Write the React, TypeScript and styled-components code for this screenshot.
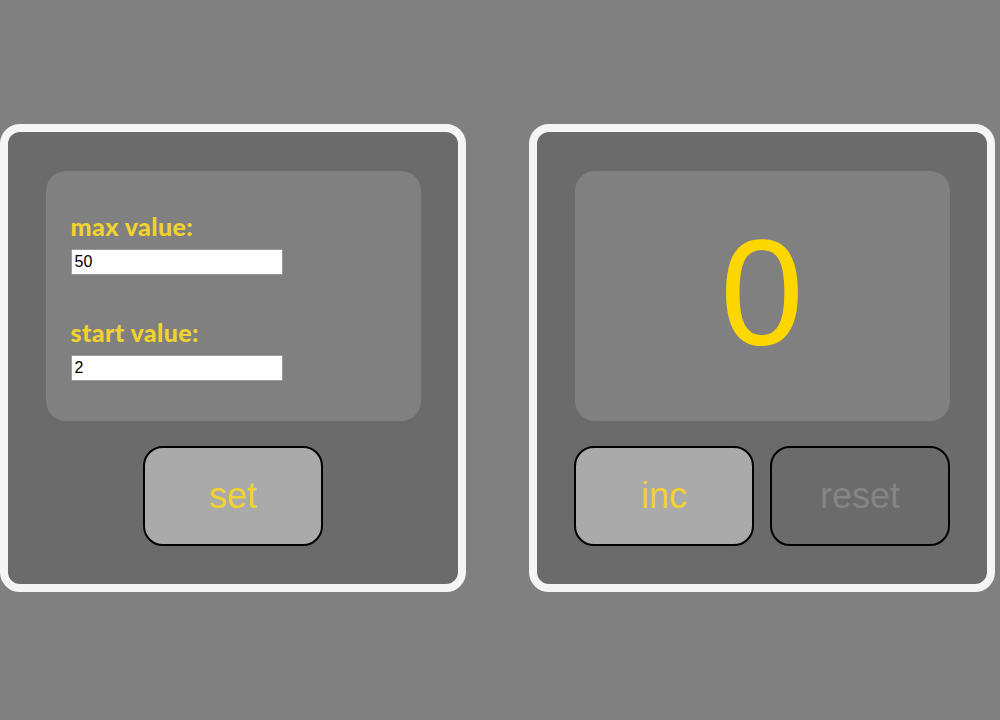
import React, { useState } from 'react';
import styled, { createGlobalStyle } from 'styled-components';

const GlobalStyle = createGlobalStyle`
  body {
    margin: 0;
    background-color: #808080;
    font-family: 'Liberation Sans', Arial, sans-serif;
  }
`;

const App = () => {
  const [max, setMax] = useState('50');
  const [start, setStart] = useState('2');
  return (
    <Page>
      <GlobalStyle />
      <Panel>
        <Display>
          <Form>
            <Field>
              <Label>max value:</Label>
              <Input value={max} onChange={(e) => setMax(e.target.value)} />
            </Field>
            <Field>
              <Label>start value:</Label>
              <Input value={start} onChange={(e) => setStart(e.target.value)} />
            </Field>
          </Form>
        </Display>
        <Buttons>
          <Button>set</Button>
        </Buttons>
      </Panel>
      <Panel>
        <Display>
          <Count>0</Count>
        </Display>
        <Buttons>
          <Button>inc</Button>
          <Button disabled>reset</Button>
        </Buttons>
      </Panel>
    </Page>
  );
};

export default App;

const Page = styled.div`
  display: flex;
  gap: 63px;
  padding-top: 124px;
`;

const Panel = styled.div`
  box-sizing: border-box;
  width: 466px;
  height: 468px;
  border: 8px solid #f5f5f5;
  border-radius: 20px;
  background-color: #6b6b6b;
  padding: 39px 37px 0;
  display: flex;
  flex-direction: column;
  align-items: center;
  gap: 25px;
`;

const Display = styled.div`
  box-sizing: border-box;
  width: 375px;
  height: 250px;
  border-radius: 20px;
  background-color: #808080;
  display: flex;
  align-items: center;
  justify-content: center;
`;

const Form = styled.div`
  width: 100%;
  padding: 0 25px;
  display: flex;
  flex-direction: column;
  gap: 42px;
`;

const Field = styled.div`
  display: flex;
  flex-direction: column;
  align-items: flex-start;
  gap: 8px;
`;

const Label = styled.div`
  font-family: Lato, 'Open Sans', sans-serif;
  font-weight: 900;
  font-size: 25px;
  line-height: 30px;
  letter-spacing: 0.4px;
  color: #f2d22e;
`;

const Input = styled.input`
  box-sizing: border-box;
  width: 212px;
  height: 26px;
  border: 1px solid #9a9a9a;
  background: #fff;
  padding: 0 3px;
  font-family: 'Liberation Sans', Arial, sans-serif;
  font-size: 16px;
  color: #000;
  outline: none;
`;

const Count = styled.div`
  font-family: 'Liberation Sans', Arial, sans-serif;
  font-size: 150px;
  line-height: 1;
  margin-bottom: 6px;
  color: #ffd700;
`;

const Buttons = styled.div`
  display: flex;
  gap: 16px;
`;

const Button = styled.button`
  box-sizing: border-box;
  width: 180px;
  height: 100px;
  border: 2px solid #000;
  border-radius: 20px;
  background-color: #aaaaaa;
  font-family: 'Liberation Sans', Arial, sans-serif;
  font-size: 36px;
  color: #f2d22e;
  cursor: pointer;

  &:disabled {
    background-color: #6b6b6b;
    color: #858585;
    cursor: default;
  }
`;
